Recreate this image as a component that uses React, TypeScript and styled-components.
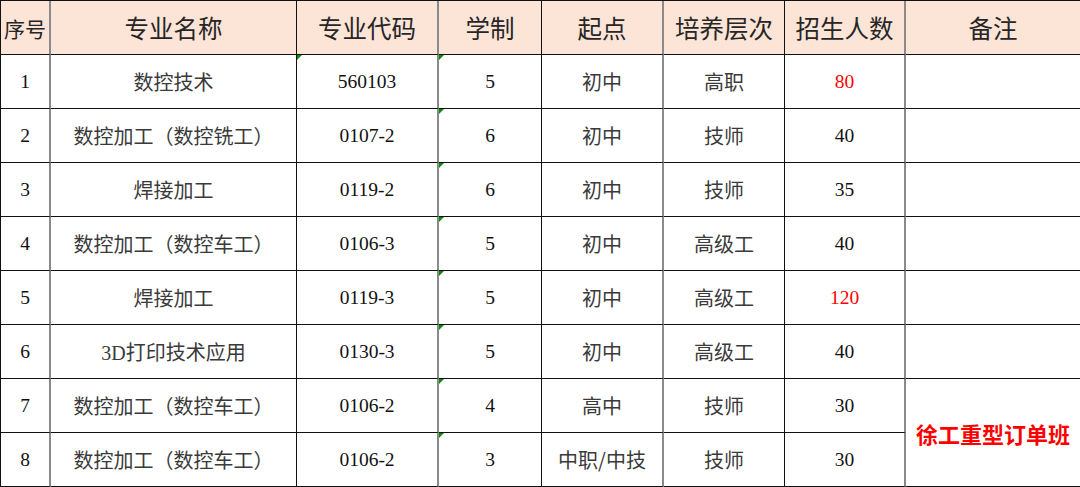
import React from "react";
import styled, { createGlobalStyle } from "styled-components";

const Global = createGlobalStyle`
  html, body { margin: 0; padding: 0; background: #fff; }
  body { font-family: "Liberation Serif", "Noto Sans CJK SC", serif; }
`;

const GRAY = "#8a8a8a";
const BLACK = "#111";

// right-edge line of each column: gray (2px) or black (1px)
const rightLines: ("gray" | "black")[] = ["gray", "black", "gray", "black", "gray", "black", "gray", "black"];

const Grid = styled.div`
  display: grid;
  grid-template-columns: 50px 246px 142px 103px 122px 121px 121px 175px;
  grid-auto-rows: 54px;
  width: 1080px;
  box-sizing: border-box;
  border-top: 1px solid ${BLACK};
  border-left: 1px solid ${BLACK};
`;

const Cell = styled.div<{ $line: "gray" | "black"; $head?: boolean; $span?: number }>`
  position: relative;
  box-sizing: border-box;
  display: flex;
  align-items: center;
  justify-content: center;
  white-space: nowrap;
  overflow: hidden;
  background: ${(p) => (p.$head ? "#fce4d6" : "#fff")};
  border-bottom: 1px solid ${BLACK};
  border-right: ${(p) => (p.$line === "gray" ? `2px solid ${GRAY}` : `1px solid ${BLACK}`)};
  ${(p) => (p.$span ? `grid-row: span ${p.$span};` : "")}
`;

const HeadText = styled.span<{ $small?: boolean }>`
  font-family: "Noto Sans CJK SC", sans-serif;
  font-size: ${(p) => (p.$small ? "21px" : "24.5px")};
  color: #262626;
  font-weight: 400;
`;

const CnText = styled.span`
  font-family: "Noto Sans CJK SC", sans-serif;
  font-size: 20px;
  color: #3a3a3a;
`;

const NumText = styled.span<{ $red?: boolean }>`
  font-family: "Liberation Serif", serif;
  font-size: 19.5px;
  color: ${(p) => (p.$red ? "#ff0000" : "#111")};
`;

const MixText = styled.span`
  font-family: "Liberation Serif", "Noto Sans CJK SC", serif;
  font-size: 20px;
  color: #3a3a3a;
`;

const NoteText = styled.span`
  font-family: "Noto Sans CJK SC", sans-serif;
  font-size: 22px;
  font-weight: 700;
  color: #ff0000;
`;

const Flag = styled.span`
  position: absolute;
  top: 0;
  left: 0;
  width: 0;
  height: 0;
  border-top: 5px solid #0a8a0a;
  border-right: 5px solid transparent;
`;

type Row = {
  no: string;
  name: string;
  code: string;
  years: string;
  start: string;
  level: string;
  count: string;
  red?: boolean;
  codeFlag?: boolean;
};

const rows: Row[] = [
  { no: "1", name: "数控技术", code: "560103", years: "5", start: "初中", level: "高职", count: "80", red: true, codeFlag: true },
  { no: "2", name: "数控加工（数控铣工）", code: "0107-2", years: "6", start: "初中", level: "技师", count: "40" },
  { no: "3", name: "焊接加工", code: "0119-2", years: "6", start: "初中", level: "技师", count: "35" },
  { no: "4", name: "数控加工（数控车工）", code: "0106-3", years: "5", start: "初中", level: "高级工", count: "40" },
  { no: "5", name: "焊接加工", code: "0119-3", years: "5", start: "初中", level: "高级工", count: "120", red: true },
  { no: "6", name: "3D打印技术应用", code: "0130-3", years: "5", start: "初中", level: "高级工", count: "40" },
  { no: "7", name: "数控加工（数控车工）", code: "0106-2", years: "4", start: "高中", level: "技师", count: "30" },
  { no: "8", name: "数控加工（数控车工）", code: "0106-2", years: "3", start: "中职/中技", level: "技师", count: "30" },
];

const headers = ["序号", "专业名称", "专业代码", "学制", "起点", "培养层次", "招生人数", "备注"];

export default function App() {
  return (
    <>
      <Global />
      <Grid>
        {headers.map((h, i) => (
          <Cell key={h} $head $line={rightLines[i]}>
            <HeadText $small={i === 0}>{h}</HeadText>
          </Cell>
        ))}
        {rows.map((r, idx) => (
          <React.Fragment key={r.no}>
            <Cell $line={rightLines[0]}>
              <NumText>{r.no}</NumText>
            </Cell>
            <Cell $line={rightLines[1]}>
              {/^\d/.test(r.name) ? <MixText>{r.name}</MixText> : <CnText>{r.name}</CnText>}
            </Cell>
            <Cell $line={rightLines[2]}>
              {r.codeFlag && <Flag />}
              <NumText>{r.code}</NumText>
            </Cell>
            <Cell $line={rightLines[3]}>
              <Flag />
              <NumText>{r.years}</NumText>
            </Cell>
            <Cell $line={rightLines[4]}>
              <CnText>{r.start}</CnText>
            </Cell>
            <Cell $line={rightLines[5]}>
              <CnText>{r.level}</CnText>
            </Cell>
            <Cell $line={rightLines[6]}>
              <NumText $red={r.red}>{r.count}</NumText>
            </Cell>
            {idx < 6 && <Cell $line={rightLines[7]} />}
            {idx === 6 && (
              <Cell $line={rightLines[7]} $span={2}>
                <NoteText>徐工重型订单班</NoteText>
              </Cell>
            )}
          </React.Fragment>
        ))}
      </Grid>
    </>
  );
}
